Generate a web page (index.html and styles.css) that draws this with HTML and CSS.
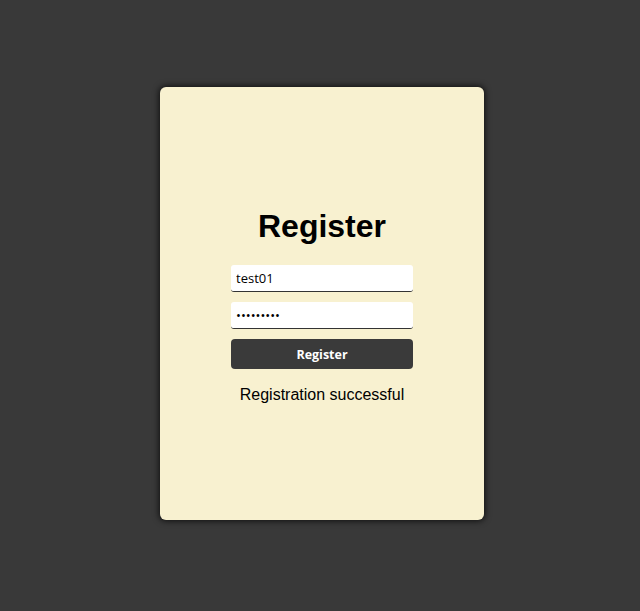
FILE: index.html
```html
<!DOCTYPE html>
<html>
<head>
<meta charset="utf-8">
<link rel="stylesheet" href="styles.css">
</head>
<body>
<div class="card">
  <h1 class="title">Register</h1>
  <form class="form">
    <input class="field" type="text" value="test01">
    <input class="field" type="password" value="123456789" autofocus>
    <button class="btn" type="button">Register</button>
  </form>
  <p class="msg">Registration successful</p>
</div>
</body>
</html>
```
FILE: styles.css
```css
html, body {
  margin: 0;
  padding: 0;
  background: #393939;
  height: 100%;
}
body {
  overflow: hidden;
}
.card {
  box-sizing: border-box;
  margin: 87px 0 0 160px;
  width: 324px;
  height: 433px;
  background: #f8f1d0;
  border-radius: 6px;
  box-shadow: 0 0 6px 1px rgba(0,0,0,0.75);
  padding-top: 121px;
  display: flex;
  flex-direction: column;
  align-items: center;
}
.title {
  margin: 0 0 20px;
  font-family: "Liberation Sans", Arial, sans-serif;
  font-size: 32px;
  line-height: 37px;
  font-weight: bold;
  color: #000;
}
.form {
  display: flex;
  flex-direction: column;
  gap: 10px;
  width: 182px;
}
.field {
  box-sizing: border-box;
  width: 182px;
  height: 27px;
  border: none;
  border-bottom: 1px solid #333;
  border-radius: 3px;
  background: #fff;
  padding: 0 5px;
  margin: 0;
  font-family: "Open Sans", sans-serif;
  font-size: 13px;
  color: #000;
  outline: none;
}
.btn {
  box-sizing: border-box;
  width: 182px;
  height: 30px;
  border: none;
  border-radius: 4px;
  background: #3a3a3a;
  color: #fff;
  font-family: "Open Sans", sans-serif;
  font-weight: bold;
  font-size: 12.5px;
  margin: 0;
  padding: 0;
}
.msg {
  margin: 17px 0 0;
  font-family: "Liberation Sans", Arial, sans-serif;
  font-size: 16px;
  line-height: 18px;
  color: #000;
}
```
